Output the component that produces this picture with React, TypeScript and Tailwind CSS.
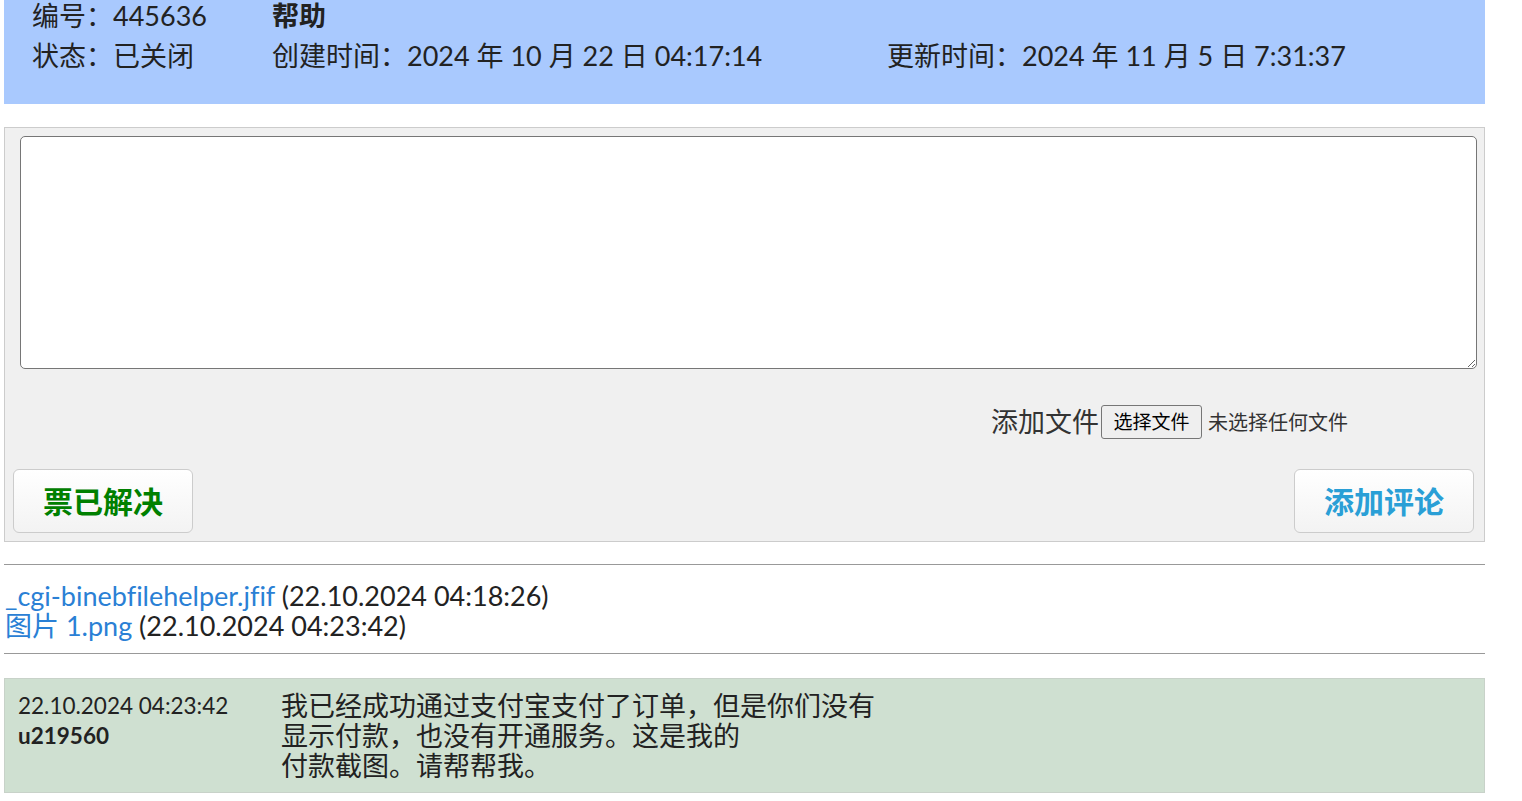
export default function App() {
  const font = { fontFamily: "Lato, 'Noto Sans CJK SC', sans-serif" }
  const cjk = { fontFamily: "'Noto Sans CJK SC', sans-serif" }
  return (
    <div className="bg-white min-h-screen text-[#222] overflow-hidden [font-variant-ligatures:none]" style={font}>
      {/* ticket header */}
      <div className="ml-[4px] w-[1481px] h-[108px] bg-[#a9c9fe] pl-[28px] -mt-[4px]">
        <div className="grid grid-cols-[240px_615px_1fr] text-[27px] leading-[40px]">
          <div>编号：445636</div>
          <div className="font-bold">帮助</div>
          <div></div>
          <div>状态：已关闭</div>
          <div>创建时间：2024 年 10 月 22 日 04:17:14</div>
          <div>更新时间：2024 年 11 月 5 日 7:31:37</div>
        </div>
      </div>

      {/* reply form */}
      <div className="ml-[4px] mt-[23px] w-[1481px] h-[415px] bg-[#f0f0f0] border border-[#cccccc] pt-[8px] pl-[15px]">
        <textarea className="block w-[1457px] h-[233px] bg-white border border-[#767676] rounded-[5px] resize-y"></textarea>
        <div className="flex items-center justify-end pr-[136px] mt-[35px] h-[35px]">
          <span className="text-[27px] leading-none text-[#333]">添加文件</span>
          <span className="ml-[2px] h-[34px] w-[101px] flex items-center justify-center border border-[#767676] rounded-[3px] bg-[#efefef] text-[19px] text-black" style={cjk}>选择文件</span>
          <span className="ml-[6px] text-[20px] text-[#333]" style={cjk}>未选择任何文件</span>
        </div>
        <div className="flex justify-between mt-[30px] -ml-[7px] pr-[10px]">
          <button className="w-[180px] h-[64px] rounded-[6px] border border-[#cccccc] bg-gradient-to-b from-white to-[#f3f3f3] text-[30px] font-bold text-[#008000]">票已解决</button>
          <button className="w-[180px] h-[64px] rounded-[6px] border border-[#cccccc] bg-gradient-to-b from-white to-[#f3f3f3] text-[30px] font-bold text-[#2a9fd6]">添加评论</button>
        </div>
      </div>

      {/* attachments */}
      <hr className="ml-[4px] mt-[22px] w-[1481px] border-t border-[#999999]" />
      <div className="pl-[5px] pt-[16px] pb-[12px] text-[27px] leading-[30px]">
        <div><a className="text-[#2a80d5]">_cgi-binebfilehelper.jfif</a> (22.10.2024 04:18:26)</div>
        <div><a className="text-[#2a80d5]">图片 1.png</a> (22.10.2024 04:23:42)</div>
      </div>
      <hr className="ml-[4px] w-[1481px] border-t border-[#999999]" />

      {/* comment */}
      <div className="ml-[4px] mt-[24px] w-[1481px] h-[115px] bg-[#cfe0d1] border border-[#c8d2c9] pt-[12px] flex">
        <div className="w-[276px] pl-[13px] text-[22.5px] leading-[30px]">
          <div>22.10.2024 04:23:42</div>
          <div className="font-bold">u219560</div>
        </div>
        <div className="w-[640px] text-[27px] leading-[30px]">
          我已经成功通过支付宝支付了订单，但是你们没有<br />显示付款，也没有开通服务。这是我的<br />付款截图。请帮帮我。
        </div>
      </div>
    </div>
  )
}
